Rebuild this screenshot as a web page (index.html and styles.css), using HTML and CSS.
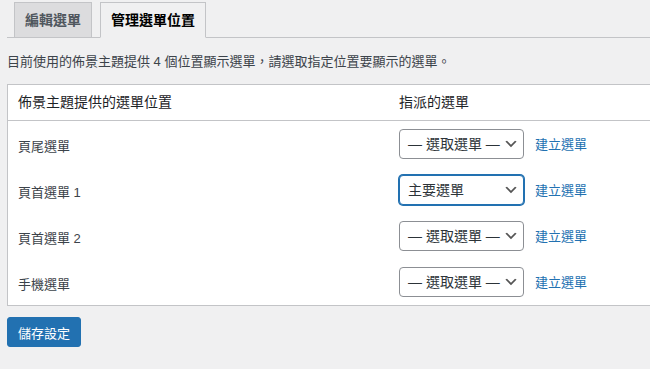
FILE: index.html
```html
<!DOCTYPE html>
<html lang="zh-Hant">
<head>
    <meta charset="UTF-8">
    <meta name="viewport" content="width=device-width, initial-scale=1.0">
    <title>管理選單位置</title>
    <link rel="stylesheet" href="styles.css">
</head>
<body>
    <div class="wrap">
        <!-- Tabs -->
        <nav class="nav-tab-wrapper">
            <a href="#" class="nav-tab">編輯選單</a>
            <a href="#" class="nav-tab nav-tab-active">管理選單位置</a>
        </nav>

        <p class="description">目前使用的佈景主題提供 4 個位置顯示選單，請選取指定位置要顯示的選單。</p>

        <!-- Locations table -->
        <table class="menu-locations">
            <thead>
                <tr>
                    <th class="col-location">佈景主題提供的選單位置</th>
                    <th>指派的選單</th>
                </tr>
            </thead>
            <tbody>
                <tr>
                    <td class="location-name">頁尾選單</td>
                    <td>
                        <div class="menu-cell">
                            <div class="select-box"><span>— 選取選單 —</span>
                                <svg viewBox="0 0 20 20" width="16" height="16"><path d="M5 6l5 5 5-5 2 1-7 7-7-7z" fill="#555"/></svg>
                            </div>
                            <a href="#" class="create-link">建立選單</a>
                        </div>
                    </td>
                </tr>
                <tr>
                    <td class="location-name">頁首選單 1</td>
                    <td>
                        <div class="menu-cell">
                            <div class="select-box is-focused"><span>主要選單</span>
                                <svg viewBox="0 0 20 20" width="16" height="16"><path d="M5 6l5 5 5-5 2 1-7 7-7-7z" fill="#555"/></svg>
                            </div>
                            <a href="#" class="create-link">建立選單</a>
                        </div>
                    </td>
                </tr>
                <tr>
                    <td class="location-name">頁首選單 2</td>
                    <td>
                        <div class="menu-cell">
                            <div class="select-box"><span>— 選取選單 —</span>
                                <svg viewBox="0 0 20 20" width="16" height="16"><path d="M5 6l5 5 5-5 2 1-7 7-7-7z" fill="#555"/></svg>
                            </div>
                            <a href="#" class="create-link">建立選單</a>
                        </div>
                    </td>
                </tr>
                <tr>
                    <td class="location-name">手機選單</td>
                    <td>
                        <div class="menu-cell">
                            <div class="select-box"><span>— 選取選單 —</span>
                                <svg viewBox="0 0 20 20" width="16" height="16"><path d="M5 6l5 5 5-5 2 1-7 7-7-7z" fill="#555"/></svg>
                            </div>
                            <a href="#" class="create-link">建立選單</a>
                        </div>
                    </td>
                </tr>
            </tbody>
        </table>

        <button type="button" class="button-primary">儲存設定</button>
    </div>
</body>
</html>
```

FILE: styles.css
```css
/* General */
body {
    font-family: "Liberation Sans", "Noto Sans CJK TC", sans-serif;
    font-size: 13px;
    color: #3c434a;
    background: #f0f0f1;
    margin: 0;
    padding: 0;
    overflow: hidden;
}

a {
    text-decoration: none;
}

.wrap {
    margin-left: 7px;
    width: 800px;
}

/* Tabs */
.nav-tab-wrapper {
    display: flex;
    padding-top: 2px;
    border-bottom: 1px solid #c3c4c7;
}

.nav-tab {
    margin-left: 7px;
    margin-bottom: -1px;
    padding: 5px 10px;
    font-size: 14px;
    line-height: 24px;
    font-weight: 600;
    color: #50575e;
    background: #dcdcde;
    border: 1px solid #c3c4c7;
}

.nav-tab + .nav-tab {
    margin-left: 8px;
}

.nav-tab-active {
    color: #000;
    background: #f0f0f1;
    border-bottom-color: #f0f0f1;
}

.description {
    margin: 14px 0 0;
    line-height: 20px;
    height: 32px;
}

/* Table */
.menu-locations {
    width: 100%;
    border-collapse: collapse;
    background: #fff;
    border: 1px solid #c3c4c7;
}

.menu-locations th {
    text-align: left;
    font-weight: 400;
    font-size: 14px;
    color: #1d2327;
    padding: 8px 10px;
    line-height: 19px;
    border-bottom: 1px solid #c3c4c7;
}

.menu-locations .col-location {
    width: 361px;
}

.menu-locations td {
    padding: 8px 10px;
    color: #3c434a;
    line-height: 20px;
}

.menu-locations td.location-name {
    padding-top: 11px;
    padding-bottom: 5px;
}

.menu-cell {
    display: flex;
    align-items: center;
    gap: 11px;
}

.select-box {
    box-sizing: border-box;
    width: 125px;
    height: 30px;
    display: flex;
    align-items: center;
    justify-content: space-between;
    padding: 0 4px 0 8px;
    font-size: 14px;
    color: #2c3338;
    border: 1px solid #8c8f94;
    border-radius: 4px;
    background: #fff;
}

.select-box.is-focused {
    border-color: #2271b1;
    box-shadow: 0 0 0 1px #2271b1;
}

.create-link {
    color: #2271b1;
    padding-top: 2px;
}

/* Save button */
.button-primary {
    margin-top: 11px;
    height: 30px;
    padding: 0 10px;
    font-family: inherit;
    font-size: 13px;
    color: #fff;
    background: #2271b1;
    border: 1px solid #2271b1;
    border-radius: 3px;
    cursor: pointer;
}
```
